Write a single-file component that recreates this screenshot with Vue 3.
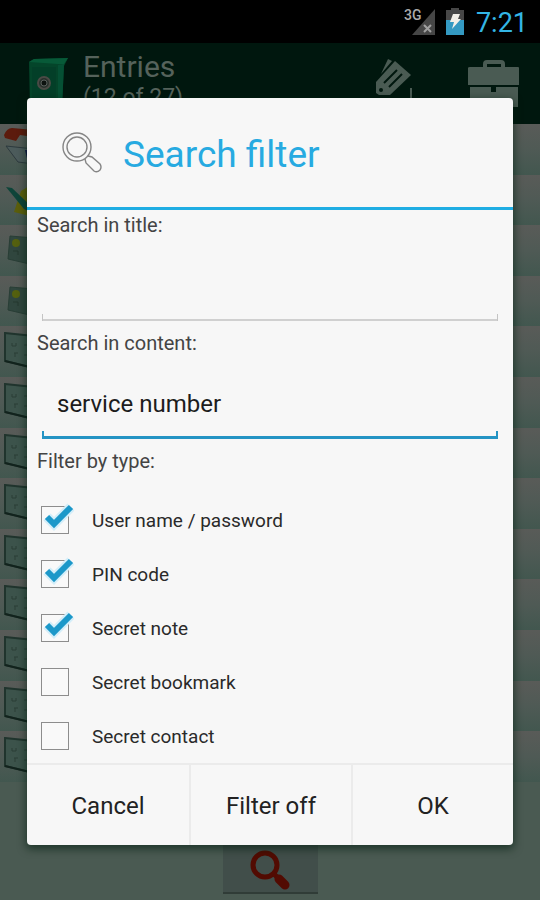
<template>
  <div class="screen">
    <!-- Status bar -->
    <div class="status-bar">
      <svg class="signal" viewBox="0 0 32 28" aria-hidden="true">
        <path d="M8 27 L31 1 V27 Z" fill="#464646" />
        <path d="M20 17 l7 7 M27 17 l-7 7" stroke="#a0a0a0" stroke-width="2" />
        <text x="0" y="12" class="signal-text">3G</text>
      </svg>
      <svg class="battery" viewBox="0 0 18 27" aria-hidden="true">
        <path d="M5 0 h8 v2 h5 v10 H0 V2 h5 Z" fill="#474747" />
        <rect y="12" width="18" height="15" fill="#3499c2" />
        <path d="M7 6 h7 l-2 5 h3 L6 21 l2 -7 H4 Z" fill="#f2efe8" />
      </svg>
      <span class="clock">7:21</span>
    </div>

    <div class="content">
      <!-- Entries behind the dialog -->
      <header class="action-bar">
        <svg class="safe" viewBox="0 0 42 50" aria-hidden="true">
          <path d="M1 5 L6 2 L40 1 L36 9 L34 50 H2 Z" fill="#04452a" />
          <path d="M1 5 L6 2 L40 1 L36 7 L30 7 Z" fill="#075a38" />
          <path d="M30 8 L36 7 L34 50 H30 Z" fill="#055034" />
          <path d="M4 10 H28 V44 H4 Z" fill="#033f28" />
          <circle cx="16" cy="26" r="6" fill="#29322d" stroke="#4a4a45" stroke-width="2" />
          <circle cx="16" cy="26" r="3" fill="#0c120f" stroke="#59605c" />
        </svg>
        <div class="heading">
          <h1>Entries</h1>
          <p>(12 of 27)</p>
        </div>
        <button class="action" type="button" aria-label="New entry">
          <svg viewBox="0 0 40 46" aria-hidden="true">
            <path d="M5 15 L12 0 L16 2 Z" fill="#4a5b53" />
            <path d="M0 23 L19 2 L35 16 L14 36 H3 L0 34 Z" fill="#4a5b53" />
            <path d="M8 24 L21 11 M13 28 L26 15" stroke="#00170e" stroke-width="2" />
            <circle cx="5" cy="31" r="2" fill="#00170e" />
            <path d="M35 29 V46 M29 42 H40" stroke="#4a5b53" stroke-width="2" />
          </svg>
        </button>
        <button class="action case" type="button" aria-label="Tools">
          <svg viewBox="0 0 52 48" aria-hidden="true">
            <path d="M17 8 V5 Q17 3 19 3 H33 Q35 3 35 5 V8" fill="none" stroke="#4a5b53" stroke-width="4" />
            <path d="M2 8 H50 Q51 8 51 9 V26 H0 V9 Q0 8 2 8 Z M2 28 H23 V33 H28 V28 H50 V48 H2 Z" fill="#4a5b53" />
          </svg>
        </button>
      </header>

      <ul class="entries">
        <li v-for="(icon, i) in entries" :key="i">
          <svg v-if="icon === 'user'" viewBox="0 0 34 44" aria-hidden="true">
            <path d="M4 11 Q7 4 12 4 L34 6 V13 L20 11 L16 17 L5 14 Z" fill="#5c1b0d" />
            <path d="M6 22 L34 25 V40 L18 38 Z" fill="#4c5b5b" stroke="#2d3a3e" />
            <path d="M25 26 H34 V39 H28 Z" fill="#101748" />
          </svg>
          <svg v-else-if="icon === 'note'" viewBox="0 0 34 44" aria-hidden="true">
            <path d="M21 16 L34 8 V42 L14 37 Z" fill="#5b5e0c" />
            <path d="M6 12 L12 13 L34 34 V39 L24 34 Z" fill="#0d4439" />
          </svg>
          <svg v-else-if="icon === 'card'" viewBox="0 0 34 44" aria-hidden="true">
            <path d="M10 11 L34 13 V40 L8 34 Z" fill="#30463e" stroke="#293e36" />
            <circle cx="16" cy="18" r="4" fill="#54600f" />
            <path d="M13 26 h5 v4" fill="none" stroke="#25382f" />
          </svg>
          <svg v-else viewBox="0 0 34 44" aria-hidden="true">
            <path d="M5 7 L34 10 V42 L5 35 Z" fill="#3c534b" stroke="#20342d" stroke-width="2" />
            <path d="M5 35 L34 42" stroke="#12231d" stroke-width="2" />
            <path d="M12 17 v3 h4 v-3 M14 27 h4 M15 27 v4 M24 19 h3 M24 29 h3" fill="none" stroke="#2a3e37" />
          </svg>
        </li>
      </ul>

      <footer class="bottom-bar">
        <button class="search" type="button" aria-label="Search">
          <svg viewBox="0 0 42 42" aria-hidden="true">
            <circle cx="16" cy="15" r="12" fill="none" stroke="#520b02" stroke-width="5" />
            <path d="M25 24 L29 28" stroke="#520b02" stroke-width="5" />
            <path d="M30 29 L36 35" stroke="#520b02" stroke-width="9" stroke-linecap="round" />
          </svg>
        </button>
      </footer>

      <!-- Search filter dialog -->
      <div class="overlay">
        <form class="dialog" role="dialog" aria-labelledby="dialog-title" @submit.prevent>
          <div class="dialog-header">
            <svg viewBox="0 0 40 42" aria-hidden="true">
              <g fill="none" stroke="#858585" stroke-width="1.4">
                <circle cx="15" cy="15" r="14" />
                <circle cx="15" cy="15" r="10" />
                <path d="M23 27 L24 31 L32 39 Q35 41 38 38 Q40 35 38 32 L30 25 L26 24" />
              </g>
            </svg>
            <h2 id="dialog-title">Search filter</h2>
          </div>

          <div class="dialog-body">
            <label for="title">Search in title:</label>
            <input id="title" v-model="title" class="field" type="text" />
            <label for="text">Search in content:</label>
            <input id="text" v-model="text" class="field active" type="text" />

            <fieldset>
              <legend>Filter by type:</legend>
              <label v-for="type in types" :key="type.name" class="check">
                <input v-model="type.checked" type="checkbox" />
                <svg viewBox="0 0 34 34" aria-hidden="true">
                  <rect x="1.5" y="3.5" width="27" height="27" class="box" />
                  <template v-if="type.checked">
                    <path d="M7 14 L14 21 L31 4" class="glow" />
                    <path d="M7 14 L14 21 L31 4" class="tick" />
                  </template>
                </svg>
                <span>{{ type.name }}</span>
              </label>
            </fieldset>
          </div>

          <div class="buttons">
            <button type="button">Cancel</button>
            <button type="button" @click="filterOff">Filter off</button>
            <button type="submit">OK</button>
          </div>
        </form>
      </div>
    </div>
  </div>
</template>

<script setup>
import { ref } from 'vue'

const entries = ['user', 'note', 'card', 'card', ...Array(9).fill('login')]

const title = ref('')
const text = ref('service number')
const types = ref([
  { name: 'User name / password', checked: true },
  { name: 'PIN code', checked: true },
  { name: 'Secret note', checked: true },
  { name: 'Secret bookmark', checked: false },
  { name: 'Secret contact', checked: false }
])

function filterOff() {
  title.value = ''
  text.value = ''
}
</script>

<style>
body {
  background: #000;
}
</style>

<style scoped>
.screen {
  display: flex;
  flex-direction: column;
  min-height: 100vh;
  font-family: Roboto, "Liberation Sans", sans-serif;
}
.screen * {
  box-sizing: border-box;
}
button {
  font: inherit;
  border: none;
  background: none;
  padding: 0;
}

.status-bar {
  display: flex;
  align-items: center;
  justify-content: flex-end;
  height: 43px;
  padding-right: 12px;
  background: #000;
}
.signal {
  width: 32px;
  height: 28px;
}
.signal-text {
  font-size: 14px;
  font-weight: 500;
  fill: #aaa;
}
.battery {
  width: 18px;
  height: 27px;
  margin: 0 12px 0 10px;
}
.clock {
  color: #33b5e5;
  font-size: 27px;
  line-height: 32px;
  padding-top: 2px;
}

.content {
  position: relative;
  display: flex;
  flex-direction: column;
  flex: 1;
  background: #4a5a52;
}

.action-bar {
  display: flex;
  align-items: flex-start;
  height: 81px;
  padding: 8px 20px 0 28px;
  background: #00170e;
  overflow: hidden;
}
.safe {
  width: 42px;
  height: 50px;
  margin-top: 6px;
}
.heading {
  flex: 1;
  margin-left: 13px;
  color: #55625b;
}
h1 {
  margin: 0;
  font-size: 30px;
  font-weight: 400;
  line-height: 32px;
}
.heading p {
  margin: 0;
  font-size: 23px;
  line-height: 30px;
}
.action {
  width: 40px;
  height: 46px;
  margin: 8px 52px 0 0;
}
.case {
  width: 52px;
  margin-right: 0;
}
.action svg {
  display: block;
  width: 100%;
}

.entries {
  display: flex;
  flex-direction: column;
  flex: 1;
  margin: 0;
  padding: 0;
  list-style: none;
}
.entries li {
  flex: 1;
  background: linear-gradient(#595b58, #4f5a55 50%, #42574f);
}
.entries svg {
  display: block;
  width: 34px;
  height: 44px;
}

.bottom-bar {
  display: flex;
  justify-content: center;
  align-items: flex-end;
  height: 118px;
  padding-bottom: 6px;
  background: #4a5a52;
}
.search {
  width: 95px;
  height: 60px;
  padding-top: 16px;
  background: #414e4a;
  border-bottom: 2px solid #303c37;
}
.search svg {
  width: 42px;
  height: 42px;
}

.overlay {
  position: absolute;
  inset: 0;
  display: flex;
  align-items: center;
  padding: 0 5%;
}
.dialog {
  width: 100%;
  background: #f7f7f7;
  border-radius: 4px;
  box-shadow: 0 3px 8px 1px rgba(0, 30, 15, 0.6);
}

.dialog-header {
  display: flex;
  align-items: center;
  gap: 21px;
  height: 112px;
  padding-left: 35px;
  border-bottom: 3px solid #1fade3;
}
.dialog-header svg {
  width: 40px;
  height: 42px;
}
h2 {
  margin: 0;
  padding-top: 3px;
  color: #27aae1;
  font-size: 37px;
  font-weight: 400;
}

.dialog-body {
  padding: 0 10px;
  color: #444;
  font-size: 20px;
}
.dialog-body > label,
legend {
  display: block;
  padding: 0;
  line-height: 30px;
}
.field {
  display: block;
  width: calc(100% - 10px);
  height: 81px;
  margin: 0 5px 7px;
  padding: 11px 15px 0;
  border: none;
  outline: none;
  background:
    linear-gradient(#c4c4c4, #c4c4c4) left bottom / 1px 7px no-repeat,
    linear-gradient(#c4c4c4, #c4c4c4) right bottom / 1px 7px no-repeat,
    linear-gradient(#d0d0d0, #d0d0d0) left bottom / 100% 2px no-repeat;
  color: #1c1c1c;
  font-family: inherit;
  font-size: 24px;
}
.field.active {
  background:
    linear-gradient(#2494c4, #2494c4) left bottom / 2px 8px no-repeat,
    linear-gradient(#2494c4, #2494c4) right bottom / 2px 8px no-repeat,
    linear-gradient(#2494c4, #2494c4) left bottom / 100% 3px no-repeat;
}

fieldset {
  min-width: 0;
  margin: 0;
  padding: 0;
  border: none;
}
legend {
  margin-bottom: 17px;
}
.check {
  position: relative;
  display: flex;
  align-items: center;
  gap: 18px;
  height: 54px;
  padding-left: 3px;
  color: #2a2a2a;
  font-size: 19px;
}
.check input {
  position: absolute;
  width: 28px;
  height: 28px;
  margin: 0;
  opacity: 0;
}
.check svg {
  width: 34px;
  height: 34px;
}
.box {
  fill: #f9f9f9;
  stroke: #8d8d8d;
}
.glow {
  fill: none;
  stroke: #d3eef9;
  stroke-width: 10;
}
.tick {
  fill: none;
  stroke: #1c98c9;
  stroke-width: 6;
}

.buttons {
  display: grid;
  grid-template-columns: repeat(3, 1fr);
  height: 82px;
  border-top: 2px solid #ebebeb;
}
.buttons button {
  padding-top: 2px;
  color: #222;
  font-size: 24px;
}
.buttons button + button {
  border-left: 2px solid #ebebeb;
}
</style>
